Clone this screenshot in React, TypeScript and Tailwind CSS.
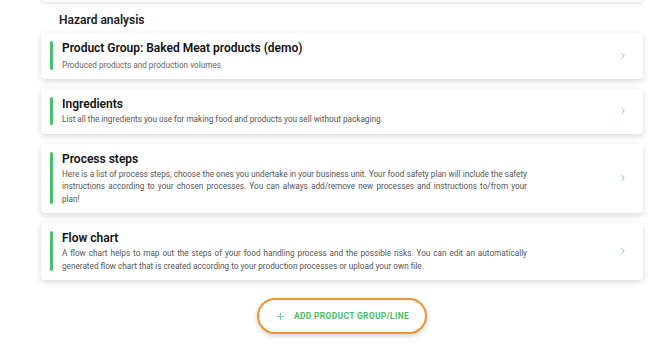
import { ChevronRight, Plus } from "lucide-react";

const sections = [
  {
    title: "Product Group: Baked Meat products (demo)",
    text: "Produced products and production volumes",
    small: true,
  },
  {
    title: "Ingredients",
    text: "List all the ingredients you use for making food and products you sell without packaging.",
  },
  {
    title: "Process steps",
    text: "Here is a list of process steps, choose the ones you undertake in your business unit. Your food safety plan will include the safety instructions according to your chosen processes. You can always add/remove new processes and instructions to/from your plan!",
  },
  {
    title: "Flow chart",
    text: "A flow chart helps to map out the steps of your food handling process and the possible risks. You can edit an automatically generated flow chart that is created according to your production processes or upload your own file.",
  },
];

export default function App() {
  return (
    <div className="w-[670px] h-[350px] overflow-hidden bg-white font-['Roboto',sans-serif] text-[#111]">
      <div className="mx-[41px] w-[602px]">
        {/* bottom edge of previous card */}
        <div className="-mt-10 h-[42px] rounded bg-white shadow-[0_1px_4px_rgba(0,0,0,0.15)]" />

        <h2 className="pl-[18px] pt-[10px] text-[12px] font-semibold leading-4 text-[#222]">Hazard analysis</h2>

        <div className="mt-[5px] flex flex-col gap-[10px]">
          {sections.map((s) => (
            <div
              key={s.title}
              className="flex items-center rounded bg-white pt-[7px] pb-[8px] pl-[9px] pr-[15px] shadow-[0_2px_6px_rgba(0,0,0,0.16)]"
            >
              <div className="self-stretch my-[1px] w-[3px] rounded-full bg-[#4cc06e]" />
              <div className="ml-[9px] flex-1">
                <div className="text-[12px] font-semibold leading-[17px] text-[#111]">{s.title}</div>
                <p
                  className={
                    s.small
                      ? "mt-[2px] text-[8.2px] leading-[12px] text-[#666]"
                      : "w-[465px] text-justify text-[8.2px] leading-[12.5px] text-[#555]"
                  }
                >
                  {s.text}
                </p>
              </div>
              <ChevronRight className="h-[10px] w-[10px] text-[#55c982]" strokeWidth={2} />
            </div>
          ))}
        </div>

        <div className="mt-[18px] flex justify-center">
          <button className="flex h-[36px] w-[170px] items-center justify-center gap-[8px] rounded-full border-2 border-[#ee9433] bg-white text-[8.5px] font-bold uppercase tracking-[0.3px] text-[#3fbf68] shadow-[0_2px_5px_rgba(0,0,0,0.18)]">
            <Plus className="h-[11px] w-[11px]" strokeWidth={1.5} />
            Add product group/line
          </button>
        </div>
      </div>
    </div>
  );
}
